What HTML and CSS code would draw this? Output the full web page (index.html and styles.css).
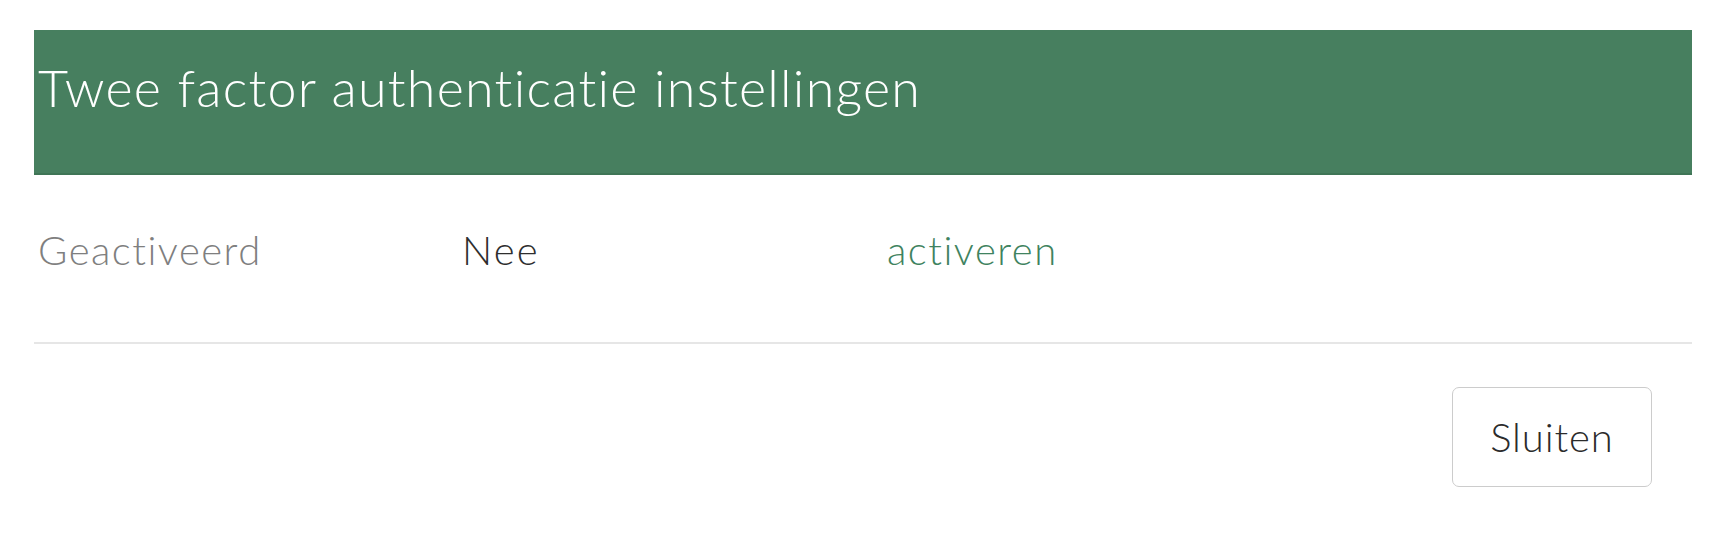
FILE: index.html
```html
<!DOCTYPE html>
<html lang="nl">
<head>
  <meta charset="UTF-8">
  <title>Twee factor authenticatie</title>
  <link rel="stylesheet" href="styles.css">
</head>
<body>
  <div class="modal">
    <div class="modal-header">
      <h2>Twee factor authenticatie instellingen</h2>
    </div>

    <div class="modal-body">
      <div class="setting-row">
        <span class="label">Geactiveerd</span>
        <span class="value">Nee</span>
        <a href="#" class="action">activeren</a>
      </div>
    </div>

    <div class="modal-footer">
      <button type="button">Sluiten</button>
    </div>
  </div>
</body>
</html>
```

FILE: styles.css
```css
body {
  margin: 0;
  padding: 30px 28px 0 34px;
  font-family: Lato, "Open Sans", sans-serif;
  font-weight: 300;
  background: #fff;
}
.modal {
  width: 1658px;
}
.modal-header {
  background-color: #477f5f;
  border-bottom: 2px solid #3f7556;
  padding: 26px 4px 55px;
}
.modal-header h2 {
  margin: 0;
  font-size: 52px;
  font-weight: 300;
  letter-spacing: 1.25px;
  line-height: 1.2;
  color: #fff;
}
.modal-body {
  padding: 51px 0 68px;
  border-bottom: 2px solid #e6e6e6;
}
.setting-row {
  display: grid;
  grid-template-columns: 424px 425px 1fr;
  font-size: 40px;
  letter-spacing: 1px;
  line-height: 1.2;
}
.setting-row span,
.setting-row a {
  padding-left: 4px;
}
.label {
  color: #7f7f7f;
  letter-spacing: 1.5px;
}
.value {
  color: #2e2e2e;
  letter-spacing: 2.2px;
}
.action {
  color: #3f8360;
  letter-spacing: 1.5px;
  text-decoration: none;
}
.modal-footer {
  display: flex;
  justify-content: flex-end;
  padding: 43px 40px 0 0;
}
button {
  width: 200px;
  height: 100px;
  font-family: inherit;
  font-size: 40px;
  font-weight: 300;
  letter-spacing: 0.9px;
  color: #2b2b2b;
  background: #fff;
  border: 1px solid #cccccc;
  border-radius: 7px;
  cursor: pointer;
}
button:hover {
  background: #f4f4f4;
}
```
